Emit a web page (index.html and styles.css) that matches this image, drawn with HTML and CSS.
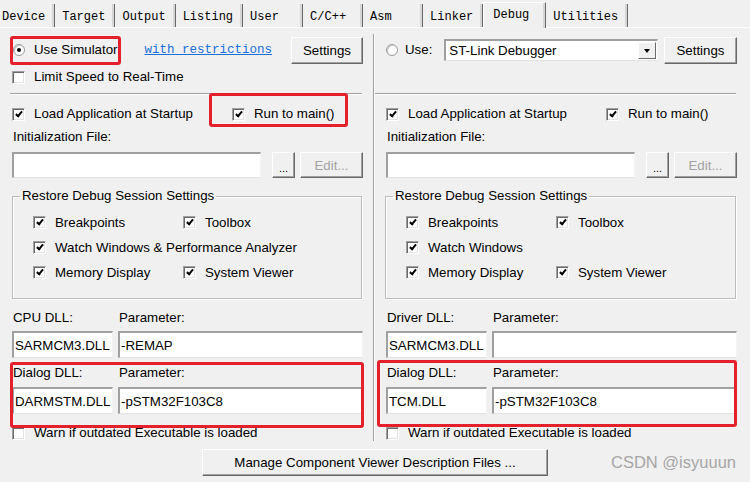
FILE: index.html
```html
<!DOCTYPE html>
<html lang="en">
  <head>
    <meta charset="UTF-8" />
    <meta name="viewport" content="width=device-width, initial-scale=1.0" />
    <title>Options for Target - Debug</title>

    <link rel="stylesheet" href="styles.css">
  </head>
  <body>
    <div class="dialog">
      <nav class="tabs">
        <span class="tab">Device</span>
        <span class="tab">Target</span>
        <span class="tab">Output</span>
        <span class="tab">Listing</span>
        <span class="tab">User</span>
        <span class="tab">C/C++</span>
        <span class="tab">Asm</span>
        <span class="tab">Linker</span>
        <span class="tab active">Debug</span>
        <span class="tab">Utilities</span>
      </nav>

      <div class="panes">
        <!-- simulator side -->
        <section class="pane">
          <div class="row top">
            <label class="opt sim mark mark-sim"><span class="rd on"></span>Use Simulator</label>
            <a class="link" href="#">with restrictions</a>
            <button class="btn settings">Settings</button>
          </div>
          <div class="row speed">
            <label class="opt"><span class="cb"></span>Limit Speed to Real-Time</label>
          </div>
          <hr class="etch" />
          <div class="row load">
            <label class="opt"><span class="cb on"></span>Load Application at Startup</label>
            <label class="opt mark mark-main"><span class="cb on"></span>Run to main()</label>
          </div>
          <div class="caption init">Initialization File:</div>
          <div class="row file">
            <div class="field"></div>
            <button class="btn dots">...</button>
            <button class="btn edit" disabled>Edit...</button>
          </div>
          <fieldset class="restore">
            <legend>Restore Debug Session Settings</legend>
            <label class="opt"><span class="cb on"></span>Breakpoints</label>
            <label class="opt"><span class="cb on"></span>Toolbox</label>
            <label class="opt wide"><span class="cb on"></span>Watch Windows &amp; Performance Analyzer</label>
            <label class="opt"><span class="cb on"></span>Memory Display</label>
            <label class="opt"><span class="cb on"></span>System Viewer</label>
          </fieldset>
          <div class="dll">
            <span class="caption">CPU DLL:</span>
            <span class="caption">Parameter:</span>
            <div class="field">SARMCM3.DLL</div>
            <div class="field">-REMAP</div>
          </div>
          <div class="dll dialog-dll mark mark-dll">
            <span class="caption">Dialog DLL:</span>
            <span class="caption">Parameter:</span>
            <div class="field">DARMSTM.DLL</div>
            <div class="field">-pSTM32F103C8</div>
          </div>
          <div class="row warn">
            <label class="opt"><span class="cb"></span>Warn if outdated Executable is loaded</label>
          </div>
        </section>

        <!-- target driver side -->
        <section class="pane pane-right">
          <div class="row top">
            <label class="opt use"><span class="rd"></span>Use:</label>
            <div class="select">
              <span>ST-Link Debugger</span>
              <span class="drop"></span>
            </div>
            <button class="btn settings">Settings</button>
          </div>
          <div class="row speed"></div>
          <hr class="etch" />
          <div class="row load">
            <label class="opt"><span class="cb on"></span>Load Application at Startup</label>
            <label class="opt"><span class="cb on"></span>Run to main()</label>
          </div>
          <div class="caption init">Initialization File:</div>
          <div class="row file">
            <div class="field"></div>
            <button class="btn dots">...</button>
            <button class="btn edit" disabled>Edit...</button>
          </div>
          <fieldset class="restore">
            <legend>Restore Debug Session Settings</legend>
            <label class="opt"><span class="cb on"></span>Breakpoints</label>
            <label class="opt"><span class="cb on"></span>Toolbox</label>
            <label class="opt wide"><span class="cb on"></span>Watch Windows</label>
            <label class="opt"><span class="cb on"></span>Memory Display</label>
            <label class="opt"><span class="cb on"></span>System Viewer</label>
          </fieldset>
          <div class="dll">
            <span class="caption">Driver DLL:</span>
            <span class="caption">Parameter:</span>
            <div class="field">SARMCM3.DLL</div>
            <div class="field"></div>
          </div>
          <div class="dll dialog-dll mark mark-dll-right">
            <span class="caption">Dialog DLL:</span>
            <span class="caption">Parameter:</span>
            <div class="field">TCM.DLL</div>
            <div class="field">-pSTM32F103C8</div>
          </div>
          <div class="row warn">
            <label class="opt"><span class="cb"></span>Warn if outdated Executable is loaded</label>
          </div>
        </section>
      </div>

      <div class="footer">
        <button class="btn manage">Manage Component Viewer Description Files ...</button>
      </div>

      <div class="watermark">CSDN @isyuuun</div>
    </div>
  </body>
</html>
```

FILE: styles.css
```css
*,
*::before,
*::after {
  box-sizing: border-box;
}
body {
  margin: 0;
  background-color: #f0f0f0;
  font-family: "Liberation Sans", Arial, sans-serif;
  font-size: 13.3px;
  color: #000;
}
button {
  font: inherit;
  color: inherit;
  padding: 0;
}

.dialog {
  position: relative;
  width: 750px;
  height: 482px;
  overflow: hidden;
}

/* tab strip */
.tabs {
  display: flex;
  align-items: flex-end;
  height: 28px;
  margin-left: -5px;
  border-bottom: 1px solid #fff;
  font-family: "Liberation Mono", "DejaVu Sans Mono", monospace;
  font-size: 12px;
}
.tab {
  height: 23px;
  min-width: 60px;
  padding: 5px 9px 0 7px;
  line-height: 16px;
  border-right: 1px solid #696969;
  box-shadow: inset -2px 0 0 #d6d6d6;
  white-space: nowrap;
}
.tab.active {
  height: 26px;
  min-width: 63px;
  margin-bottom: -1px;
  padding: 4px 9px 0 9px;
  border-top: 1px solid #fff;
  border-left: 1px solid #fff;
  background-color: #f0f0f0;
}

/* two columns */
.panes {
  display: grid;
  grid-template-columns: 373px 1fr;
  margin-top: 6px;
}
.pane {
  display: flex;
  flex-direction: column;
  padding: 2px 10px 0 12px;
}
.pane-right {
  padding: 2px 13px 0 12px;
  border-left: 1px solid #a0a0a0;
  box-shadow: inset 1px 0 0 #fff;
}

.row {
  display: flex;
  align-items: center;
}
.row.top {
  height: 28px;
}
.row.speed {
  height: 16px;
  margin-top: 5px;
}
.row.load {
  display: grid;
  grid-template-columns: 220px auto;
  align-items: center;
  justify-items: start;
  height: 32px;
  padding-top: 6px;
}
.row.file {
  height: 26px;
  margin-top: 7px;
}
.row.warn {
  height: 16px;
  margin-top: 11px;
}

.etch {
  height: 2px;
  margin: 8px 1px 0 -2px;
  border: 0;
  border-top: 1px solid #a0a0a0;
  border-bottom: 1px solid #fff;
}
.pane-right .etch {
  margin-left: -11px;
}

.caption {
  line-height: 16px;
  padding-left: 1px;
  white-space: nowrap;
}
.caption.init {
  margin-top: 2px;
}

/* checkbox / radio */
.opt {
  display: inline-flex;
  align-items: center;
  gap: 9px;
  line-height: 16px;
  white-space: nowrap;
}
.opt.sim {
  margin-left: 1px;
}
.opt.use {
  gap: 7px;
}
.cb {
  display: grid;
  place-items: center;
  flex: none;
  width: 13px;
  height: 13px;
  background-color: #fff;
  border: 1px solid;
  border-color: #a0a0a0 #fff #fff #a0a0a0;
  box-shadow: inset 1px 1px 0 #696969, inset -1px -1px 0 #e3e3e3;
}
.cb.on::after {
  content: "";
  width: 4px;
  height: 7px;
  border: solid #000;
  border-width: 0 2px 2px 0;
  transform: translate(0, -1px) rotate(40deg);
}
.rd {
  display: grid;
  place-items: center;
  flex: none;
  width: 12px;
  height: 12px;
  border-radius: 50%;
  background-color: #fff;
  border: 1px solid #9a9a9a;
  box-shadow: inset 1px 1px 0 #c8c8c8;
}
.rd.on::after {
  content: "";
  width: 4px;
  height: 4px;
  border-radius: 50%;
  background-color: #000;
}

.link {
  margin-left: 27px;
  color: #1a6fd8;
  font-family: "Liberation Mono", "DejaVu Sans Mono", monospace;
  font-size: 12.5px;
  text-decoration: underline;
}

/* buttons and fields */
.btn {
  height: 27px;
  background-color: #f0f0f0;
  border: 1px solid;
  border-color: #fff #696969 #696969 #fff;
  box-shadow: inset -1px -1px 0 #a0a0a0;
  cursor: pointer;
}
.btn.settings {
  width: 72px;
  margin-left: auto;
}
.pane-right .btn.settings {
  width: 73px;
}
.btn.dots {
  width: 23px;
  height: 26px;
  margin-left: 11px;
  padding-top: 6px;
  font-size: 11px;
}
.btn.edit {
  width: 63px;
  height: 26px;
  margin-left: 5px;
  color: #a3a3a3;
  cursor: default;
}
.field {
  display: flex;
  align-items: center;
  height: 27px;
  padding-left: 1px;
  background-color: #fff;
  border: 2px solid;
  border-width: 2px 1px 1px 2px;
  border-color: #a0a0a0 #f4f4f4 #e3e3e3 #a0a0a0;
  white-space: nowrap;
  overflow: hidden;
}
.row.file .field {
  flex: 1;
  height: 26px;
}

.select {
  display: flex;
  align-items: center;
  width: 214px;
  height: 22px;
  margin-left: 12px;
  padding-left: 3px;
  background-color: #fff;
  border: solid;
  border-width: 2px 1px 1px 2px;
  border-color: #a0a0a0 #f4f4f4 #e3e3e3 #a0a0a0;
}
.drop {
  display: grid;
  place-items: center;
  width: 18px;
  height: 17px;
  margin-left: auto;
  margin-right: 1px;
  background-color: #f0f0f0;
  border: 1px solid;
  border-color: #fff #696969 #696969 #fff;
}
.drop::after {
  content: "";
  border-top: 4px solid #000;
  border-left: 3.5px solid transparent;
  border-right: 3.5px solid transparent;
}

/* group box */
.restore {
  display: grid;
  grid-template-columns: 150px auto;
  grid-auto-rows: 25px;
  align-items: center;
  margin: 10px 1px 0 0;
  padding: 6px 10px 13px 20px;
  border: 1px solid #bcbcbc;
  box-shadow: inset 1px 1px 0 #fff, 1px 1px 0 #fff;
}
.pane-right .restore {
  margin-left: -1px;
}
.restore legend {
  margin-left: -13px;
  padding: 0 2px;
  line-height: 16px;
}
.restore .wide {
  grid-column: span 2;
}

/* dll rows */
.dll {
  display: grid;
  grid-template-columns: 101px 1fr;
  grid-template-rows: 16px 27px;
  column-gap: 5px;
  row-gap: 5px;
  margin-top: 11px;
}
.dll .field {
  padding-left: 1px;
}
.dialog-dll {
  margin-top: 7px;
  row-gap: 6px;
}

/* bottom */
.footer {
  display: flex;
  justify-content: center;
  margin-top: 8px;
}
.btn.manage {
  width: 346px;
}

/* red annotation frames */
.mark {
  position: relative;
}
.mark::after {
  content: "";
  position: absolute;
  z-index: 2;
  border: 3px solid #e4202c;
  border-radius: 3px;
  pointer-events: none;
}
.mark-sim::after {
  inset: -6px -3px -7px -3px;
}
.mark-main::after {
  inset: -13px -13px -5px -23px;
}
.mark-dll::after {
  inset: -3px -1px -14px -2px;
}
.mark-dll-right::after {
  inset: -5px 0 -13px -9px;
}

.watermark {
  position: absolute;
  top: 453px;
  right: 14px;
  color: #a6a6a6;
  font-size: 16.5px;
  white-space: nowrap;
}
```
